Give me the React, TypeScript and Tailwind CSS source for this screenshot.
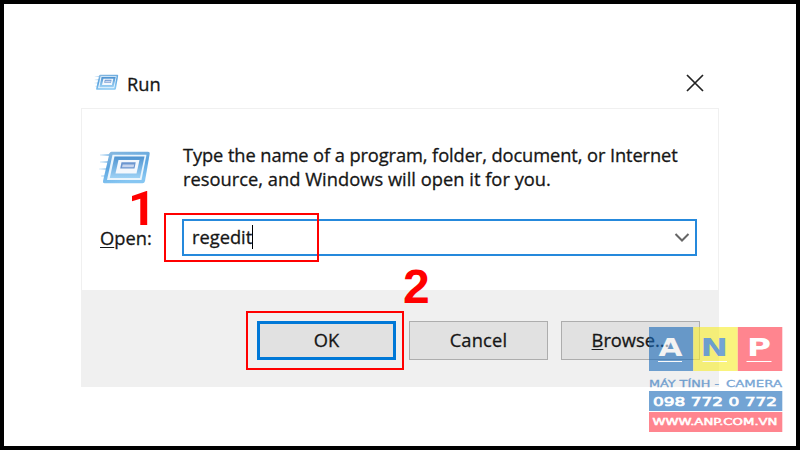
import React from "react";

const UI = "font-['Open_Sans','Noto_Sans',sans-serif]";

function RunIcon({ className }: { className: string }) {
  return (
    <svg viewBox="0 0 52 36" className={className} fill="none">
      <defs>
        <linearGradient id="frame" x1="0" y1="0" x2="0.3" y2="1">
          <stop offset="0" stopColor="#8dbbe0" />
          <stop offset="0.5" stopColor="#5ba4df" />
          <stop offset="1" stopColor="#86c6f2" />
        </linearGradient>
        <linearGradient id="screen" x1="0" y1="0" x2="0" y2="1">
          <stop offset="0" stopColor="#4f93d0" />
          <stop offset="1" stopColor="#9ed2f5" />
        </linearGradient>
        <linearGradient id="trail" x1="0" y1="0" x2="1" y2="0">
          <stop offset="0" stopColor="#a9d2f2" stopOpacity="0.2" />
          <stop offset="1" stopColor="#6fb0e4" />
        </linearGradient>
      </defs>
      <path d="M1 4H13V6H1ZM1 11H11V13H1ZM0 18H9V20H0ZM2 25H8V27H2Z" fill="url(#trail)" />
      <path d="M12.500 1.700H49Q51 1.700 50.700 3.700L46 31Q45.500 33.300 43.500 33.300H5.500Q3.500 33.300 4 31L10.500 3.200Q11 1.700 12.500 1.700Z" fill="url(#frame)" />
      <path d="M13.500 4.700H47.500L42.500 30H8Z" fill="#eaf5fd" />
      <path d="M15.500 6.500H45.500L41 28H10.800Z" fill="url(#screen)" />
      <path d="M19.500 10H40.500L37.500 23.500H16.500Z" fill="#f4f8fd" />
      <path d="M22.500 12.300H36.700L35.500 18.500H21.200Z" fill="#6c96cf" />
      <path d="M23.700 14.500H35.200L34.600 17.300H23Z" fill="#c7d5ee" />
    </svg>
  );
}

function Watermark() {
  const bold = { fontFamily: "'DejaVu Sans', sans-serif", fontWeight: 700 };
  const thin = { fontFamily: "'DejaVu Sans', sans-serif", fontWeight: 400 };
  return (
    <svg viewBox="0 0 134 106" className="absolute left-[649px] top-[327px] h-[106px] w-[134px] opacity-60">
      <rect width="44.300" height="44" fill="#1769b9" />
      <rect x="44.300" width="44.500" height="44" fill="#f8ed2a" />
      <rect x="88.800" width="44.500" height="44" fill="#ff3546" />
      <g style={bold} fontSize="24">
        <text x="9.500" y="28.800" fill="#fff" textLength="24" lengthAdjust="spacingAndGlyphs">A</text>
        <text x="51.500" y="28.800" fill="#1769b9" textLength="27.500" lengthAdjust="spacingAndGlyphs">N</text>
        <text x="98" y="28.800" fill="#fff" textLength="24" lengthAdjust="spacingAndGlyphs">P</text>
      </g>
      <path d="M9 34.500H33M53.500 34.500H78M97.500 34.500H122.500" stroke="#fff" strokeWidth="1.200" />
      <g style={thin} fontSize="9.500" fill="#1769b9" stroke="#1769b9" strokeWidth="0.300">
        <text x="0" y="60" textLength="70" lengthAdjust="spacingAndGlyphs">MÁY TÍNH -</text>
        <text x="77" y="60" textLength="56" lengthAdjust="spacingAndGlyphs">CAMERA</text>
      </g>
      <rect y="64" width="133.300" height="20" fill="#1769b9" />
      <rect y="85" width="133.300" height="20" fill="#ff3546" />
      <g fill="#fff" stroke="#fff" style={thin}>
        <text x="4" y="78.700" fontSize="12.500" strokeWidth="0.700" textLength="124" lengthAdjust="spacingAndGlyphs">098 772 0 772</text>
        <text x="3.500" y="97.500" fontSize="9.500" strokeWidth="0.500" textLength="125" lengthAdjust="spacingAndGlyphs">WWW.ANP.COM.VN</text>
      </g>
    </svg>
  );
}

export default function App() {
  return (
    <div className={`relative h-[450px] w-[800px] overflow-hidden border-4 border-black bg-white pl-[77px] pt-[55px] text-[18.3px] text-[#161616] [-webkit-text-stroke:0.3px_#161616] ${UI}`}>
      <section className="w-[638px]">
        <header className="flex h-[49px] items-center pl-[13px] pr-[15px]">
          <RunIcon className="-mt-0.5 h-[17px] w-[25px]" />
          <h1 className="ml-[8px] text-[18.3px] leading-6">Run</h1>
          <svg viewBox="0 0 18 18" className="-mt-0.5 ml-auto h-[18px] w-[18px]" stroke="#222" strokeWidth="1.700">
            <path d="M1 1L17 17M17 1L1 17" />
          </svg>
        </header>
        <div className="h-[182px] border border-b-0 border-[#f0f0f0] pl-[17px] pt-[34px]">
          <div className="flex h-[48px]">
            <RunIcon className="mt-[7px] h-[36px] w-[52px]" />
            <p className="ml-[32px] whitespace-nowrap leading-6 tracking-[-0.1px]">
              Type the name of a program, folder, document, or Internet
              <br />
              <span className="tracking-[0.02px]">resource, and Windows will open it for you.</span>
            </p>
          </div>
          <div className="mt-[28px] flex h-[37px] items-center">
            <label className="w-[83px] pl-px">
              <span className="underline decoration-1 underline-offset-2">O</span>pen:
            </label>
            <div className="flex h-[37px] w-[515px] items-center border-2 border-[#2589dc] pl-[8px] pr-[5px]">
              <span className="-mt-0.5">regedit</span>
              <span className="-mt-0.5 h-[24px] w-px bg-black" />
              <svg viewBox="0 0 16 9" className="ml-auto h-[9px] w-[16px]" fill="none" stroke="#666" strokeWidth="2">
                <path d="M1.500 1L8 7.500L14.500 1" />
              </svg>
            </div>
          </div>
        </div>
        <footer className="flex h-[97px] gap-[14px] bg-[#f0f0f0] pl-[176px] pt-[31px]">
          <button className="h-[39px] w-[139px] border-[3px] border-[#0078d7] bg-[#e1e1e1] pb-0.5">OK</button>
          <button className="-ml-px h-[39px] w-[139px] border border-[#adadad] bg-[#e1e1e1] pb-0.5 tracking-[0.2px]">Cancel</button>
          <button className="-ml-px h-[39px] w-[139px] border border-[#adadad] bg-[#e1e1e1] pb-0.5">
            <span className="underline decoration-1 underline-offset-2">B</span>rowse...
          </button>
        </footer>
      </section>

      <div className="absolute -left-1 -top-1 h-[450px] w-[800px] [-webkit-text-stroke:0]">
        <div className="absolute left-[164px] top-[213px] h-[49px] w-[155px] border-2 border-[#f00]" />
        <div className="absolute left-[246px] top-[311px] h-[59px] w-[158px] border-2 border-[#f00]" />
        <span className="absolute left-[128px] top-[185px] font-[Roboto,sans-serif] text-[49px] font-bold leading-[48px] text-[#f00]">1</span>
        <span className="absolute left-[403px] top-[263px] font-['Liberation_Sans',Arial,sans-serif] text-[48px] font-bold leading-[48px] text-[#f00]">2</span>
        <Watermark />
      </div>
    </div>
  );
}
